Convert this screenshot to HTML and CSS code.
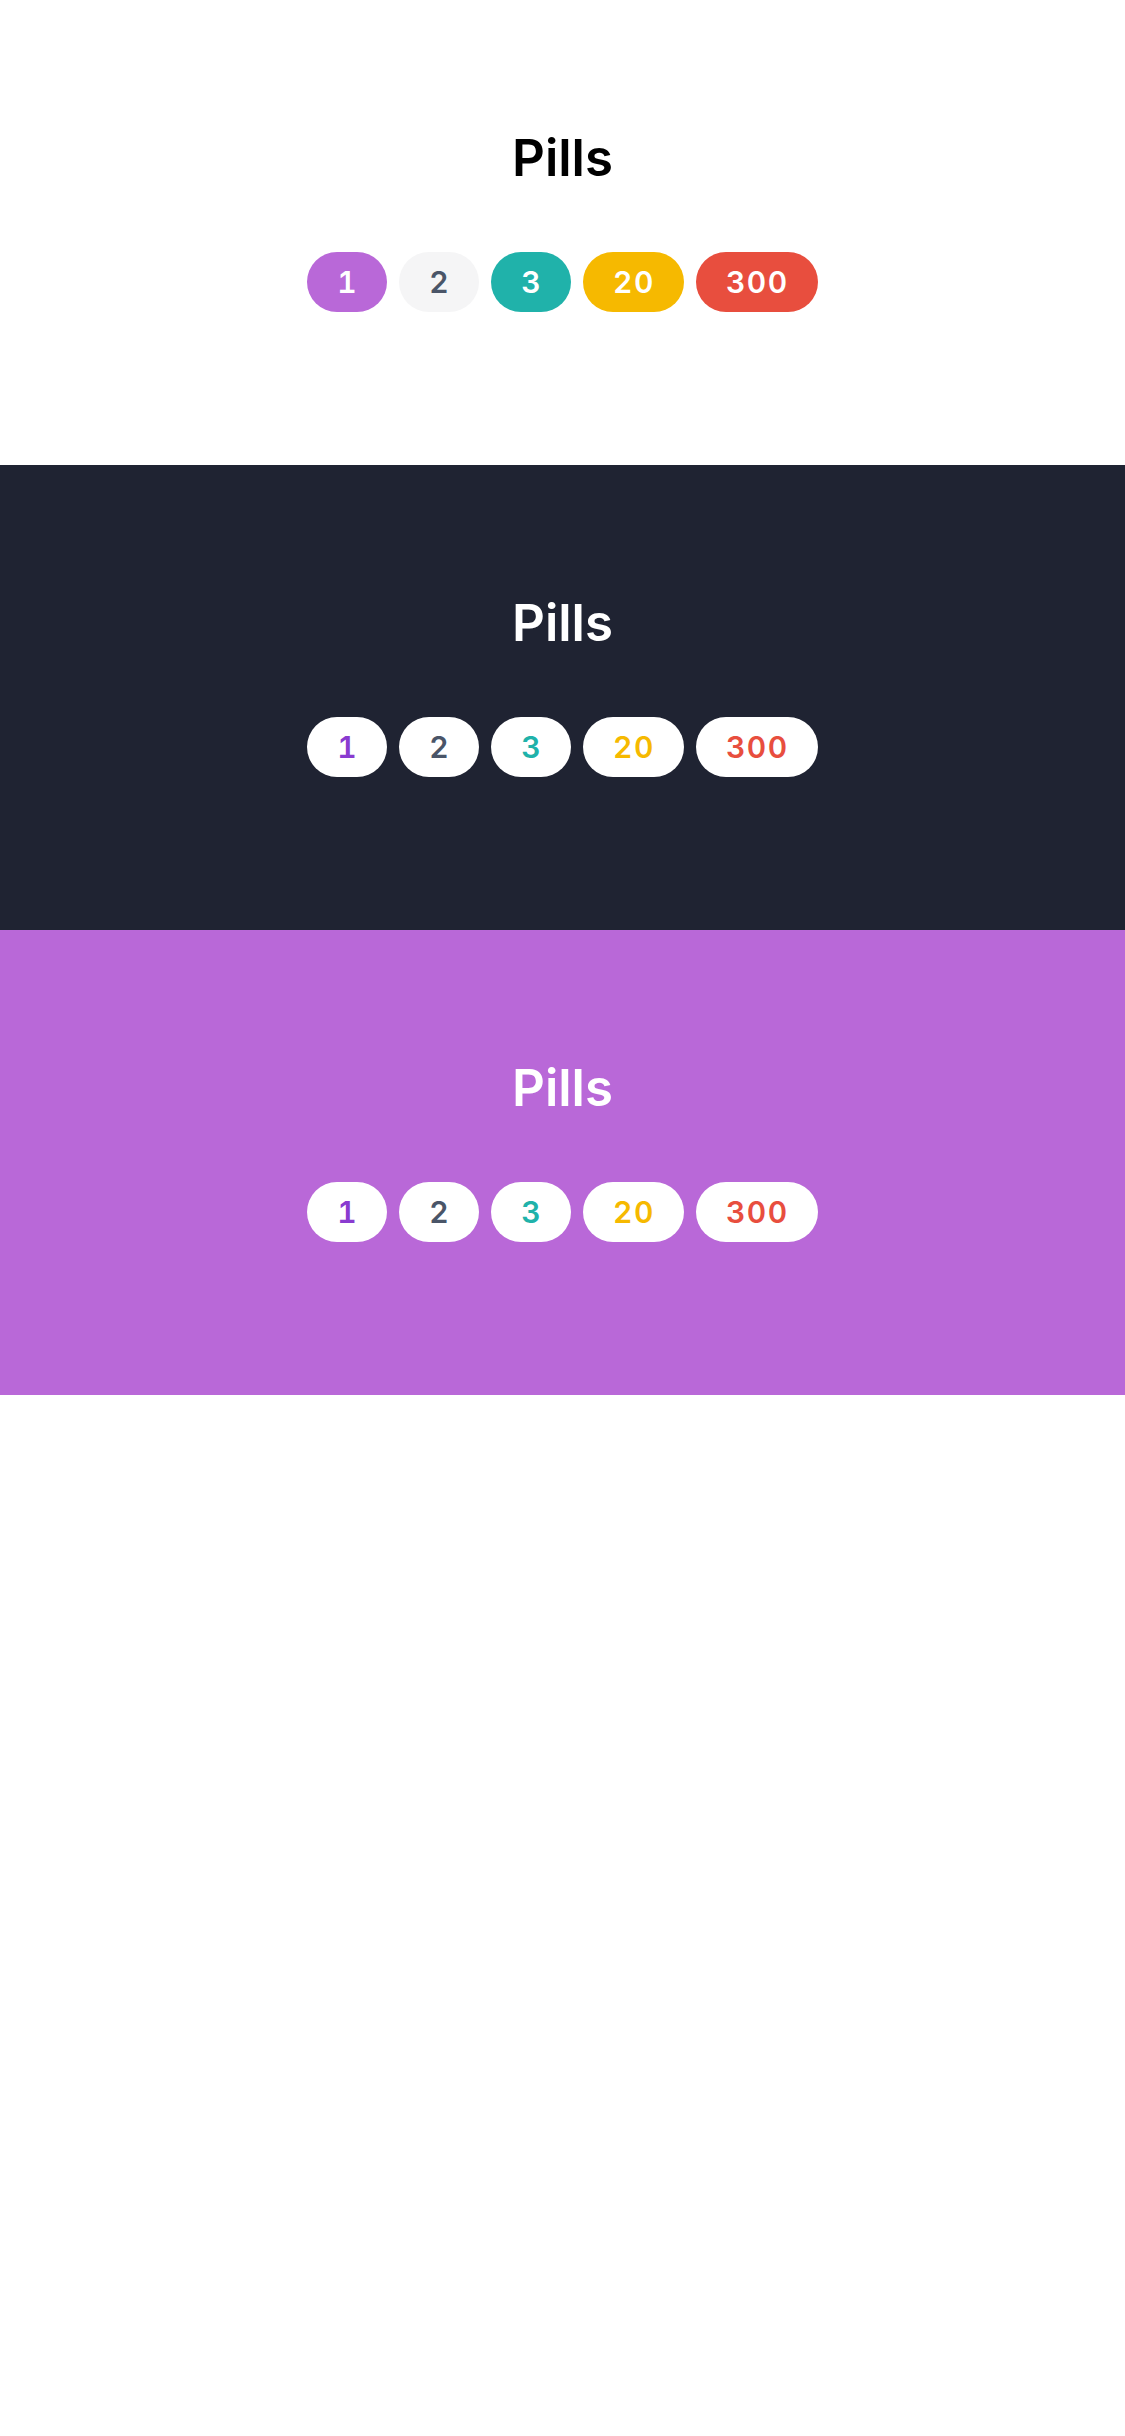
FILE: index.html
```html
<!DOCTYPE html>
<html lang="en">
<head>
<meta charset="utf-8">
<title>Pills</title>
<link rel="stylesheet" href="styles.css">
</head>
<body>
  <section class="demo demo-light">
    <h1 class="demo-title">Pills</h1>
    <div class="pill-row">
      <span class="pill pill-purple">1</span>
      <span class="pill pill-gray">2</span>
      <span class="pill pill-teal">3</span>
      <span class="pill pill-yellow">20</span>
      <span class="pill pill-red">300</span>
    </div>
  </section>
  <section class="demo demo-dark">
    <h1 class="demo-title">Pills</h1>
    <div class="pill-row">
      <span class="pill pill-inv pill-purple">1</span>
      <span class="pill pill-inv pill-gray">2</span>
      <span class="pill pill-inv pill-teal">3</span>
      <span class="pill pill-inv pill-yellow">20</span>
      <span class="pill pill-inv pill-red">300</span>
    </div>
  </section>
  <section class="demo demo-brand">
    <h1 class="demo-title">Pills</h1>
    <div class="pill-row">
      <span class="pill pill-inv pill-purple">1</span>
      <span class="pill pill-inv pill-gray">2</span>
      <span class="pill pill-inv pill-teal">3</span>
      <span class="pill pill-inv pill-yellow">20</span>
      <span class="pill pill-inv pill-red">300</span>
    </div>
  </section>
</body>
</html>
```
FILE: styles.css
```css
* { box-sizing: border-box; }
html, body {
  margin: 0;
  padding: 0;
  background: #ffffff;
  font-family: Inter, "Noto Sans", "Liberation Sans", sans-serif;
}
.demo {
  height: 465px;
  padding-top: 128px;
  display: flex;
  flex-direction: column;
  align-items: center;
}
.demo-light { background: #ffffff; color: #000000; }
.demo-dark { background: #1f2332; color: #ffffff; }
.demo-brand { background: #b968d8; color: #ffffff; }

.demo-title {
  margin: 0;
  font-size: 51px;
  line-height: 60px;
  font-weight: 600;
  letter-spacing: 0;
}
.pill-row {
  margin-top: 64px;
  display: flex;
  gap: 12px;
}
.pill {
  height: 60px;
  line-height: 60px;
  padding: 0 29px 0 30px;
  border-radius: 30px;
  font-size: 30px;
  font-weight: 600;
  font-variant-numeric: tabular-nums;
  letter-spacing: 1.5px;
  color: #ffffff;
  text-align: center;
}
.pill-purple { background: #b968d8; }
.pill-gray { background: #f5f5f6; color: #4a5568; }
.pill-teal { background: #20b2aa; }
.pill-yellow { background: #f6b900; }
.pill-red { background: #e84e3e; }

.pill-inv { background: #ffffff; }
.pill-inv.pill-purple { color: #8a3bd0; }
.pill-inv.pill-gray { color: #4a5568; }
.pill-inv.pill-teal { color: #20b2aa; }
.pill-inv.pill-yellow { color: #f6b900; }
.pill-inv.pill-red { color: #e84e3e; }
```
